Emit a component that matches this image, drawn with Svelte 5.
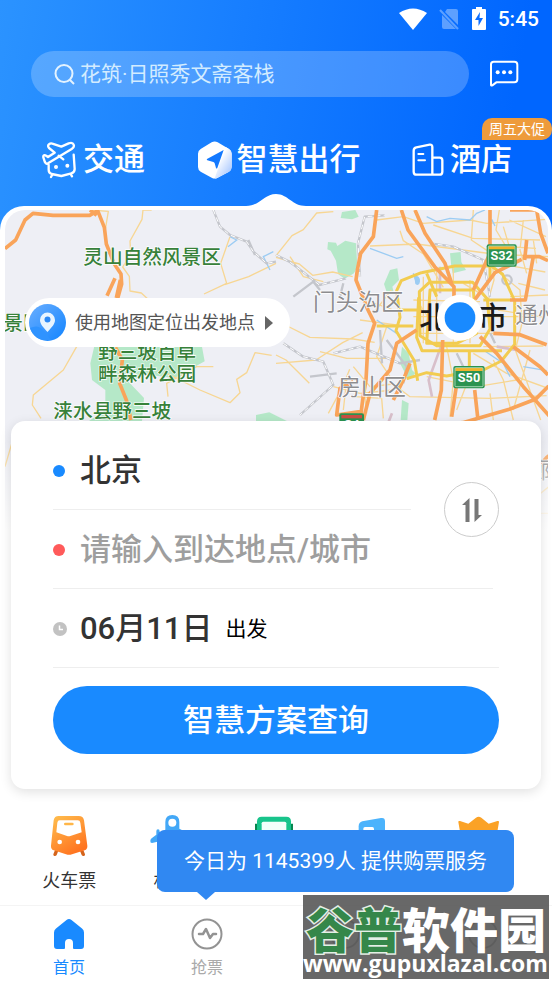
<script lang="ts">
	interface Tab {
		id: string;
		label: string;
		badge?: string;
	}

	const tabs: Tab[] = [
		{ id: 'transit', label: '交通' },
		{ id: 'smart', label: '智慧出行' },
		{ id: 'hotel', label: '酒店', badge: '周五大促' }
	];

	let keyword = $state('');
	let from = $state('北京');
	let to = $state('');
	let activeTab = $state('smart');

	function swap() {
		[from, to] = [to, from];
	}
</script>

<div class="app">
	<header class="header">
		<div class="status">
			<svg width="28" height="22" viewBox="0 0 28 22" aria-hidden="true">
				<path d="M0 5Q14-4 28 5L14 22z" fill="#fff" />
			</svg>
			<svg width="21" height="22" viewBox="0 0 21 22" aria-hidden="true">
				<path d="M8 1h9q2 0 2 2v14L6 4zM3 7l14 14H5q-2 0-2-2z" fill="#5da0ff" />
				<path d="M1 2l18 19" stroke="#5da0ff" stroke-width="2" />
			</svg>
			<svg width="14" height="23" viewBox="0 0 14 23" aria-hidden="true">
				<path d="M4 0h6v2h3q1 0 1 1v19q0 1-1 1H1q-1 0-1-1V3q0-1 1-1h3z" fill="#fff" />
				<path d="M8 5L3 13h3.500v6L11 11H7.500z" fill="#0b6dff" />
			</svg>
			<span class="clock">5:45</span>
		</div>

		<div class="search-row">
			<label class="search">
				<svg width="21" height="21" viewBox="0 0 21 21" fill="none" stroke="#e4f3ff" stroke-width="2" aria-hidden="true">
					<circle cx="10" cy="9.500" r="8.500" />
					<path d="M15.500 15.500l4.500 4.500" />
				</svg>
				<input type="text" aria-label="搜索" placeholder="花筑·日照秀文斋客栈" bind:value={keyword} />
			</label>
			<button class="message" type="button" aria-label="消息">
				<svg width="30" height="28" viewBox="640 182 90 84" aria-hidden="true">
					<path d="M646 257V195q0-8 8-8h62q9 0 9 9v44q0 9-9 9h-54l-12 9q-4 2-4-1z" fill="none" stroke="#fff" stroke-width="6" stroke-linejoin="round" />
					<g fill="#fff">
						<circle cx="666" cy="219" r="6" />
						<circle cx="685" cy="219" r="6" />
						<circle cx="704" cy="219" r="6" />
					</g>
				</svg>
			</button>
		</div>

		<nav class="tabs">
			{#each tabs as tab (tab.id)}
				<button class="tab" class:active={tab.id === activeTab} type="button" onclick={() => (activeTab = tab.id)}>
					{#if tab.id === 'transit'}
						<svg width="36" height="38" viewBox="123 89 108 114" fill="none" stroke="#fff" stroke-width="7" stroke-linecap="round" stroke-linejoin="round" aria-hidden="true">
							<path d="M147 110q-6-7 1-12q4-3 9-1l27 9l22-10q12-4 15 4q3 7-6 13l-71 43q-6 3-9-3l-5-15q-1-8 6-6l8 5l20-13z" />
							<path d="M176 133l14 11" />
							<path d="M146 161v15q0 9 9 12l29 6l30-8q10-3 10-13l-3-43" />
							<path d="M157 190l-4 7M212 188l4 7" />
							<circle cx="168" cy="167" r="2.500" fill="#fff" />
							<circle cx="202" cy="163" r="2.500" fill="#fff" />
						</svg>
					{:else if tab.id === 'smart'}
						<svg width="36" height="38" viewBox="591 92 108 114" aria-hidden="true">
							<defs>
								<linearGradient id="hex" x1="0.500" y1="0.200" x2="1" y2="0.800">
									<stop offset="0" stop-color="#fff" />
									<stop offset="1" stop-color="#a9c8ff" />
								</linearGradient>
							</defs>
							<path d="M635 96q9-5 18 0l34 20q8 5 8 14v40q0 9-8 14l-34 18q-9 5-18 0l-33-18q-8-5-8-14v-40q0-9 8-14z" fill="#fff" />
							<path d="M677 110l10 6q8 5 8 14v40q0 9-8 14l-34 18q-5 3-9 2z" fill="url(#hex)" />
							<path d="M671 119l-50 27q-2 2 1 4l18 5q3 1 4 4l4 14q2 3 4 0z" fill="#1379ff" />
						</svg>
					{:else}
						<svg width="32" height="34" viewBox="413 96 96 102" fill="none" stroke="#fff" stroke-width="7" stroke-linecap="round" stroke-linejoin="round" aria-hidden="true">
							<path d="M474 190V108q0-8-8-7l-40 8q-8 2-8 10v63q0 9 9 9h68q9 0 9-9v-34q0-8-8-8h-20" />
							<path d="M432 129h15M432 148h20" stroke-width="6" />
						</svg>
					{/if}
					<span>{tab.label}</span>
					{#if tab.badge}
						<span class="badge">{tab.badge}</span>
					{/if}
				</button>
			{/each}
		</nav>
	</header>

	<main class="panel">
		<svg class="notch" width="60" height="13" viewBox="0 0 60 13" aria-hidden="true">
			<path d="M0 13V12C14 12 18 0 30 0S46 12 60 12v1z" fill="#fff" />
		</svg>

		<div class="map">
			<svg class="map-art" viewBox="15 30 1629 960" preserveAspectRatio="xMidYMin slice" aria-hidden="true">
				<defs>
					<linearGradient id="fade" x1="0" y1="0" x2="0" y2="1">
						<stop offset="0" stop-color="#fff" stop-opacity="0" />
						<stop offset="1" stop-color="#fff" />
					</linearGradient>
				</defs>
				<rect x="0" y="30" width="1660" height="960" fill="#eeeff5" />

				<g fill="#b5e8c8">
					<path d="M285 430l-14 60 5 50 40 30v60l-50 34h160l6-70-48-50 60-20 80 10 90-50-10-54z" />
					<path d="M768 645l40-8 60 30v20H768z" />
					<path d="M984 126l24 2 4 10 24-16 32 8 4 70-10 20-28 16-20-14-6-40-16-30-10-4z" />
					<path d="M1026 36l40-6 10 20-20 8-34-4z" />
					<path d="M1170 210l22-5 5 35-20 20 5 20-20 2-10-30z" />
					<path d="M1206 440l20 20 10 50 10 10-20 20-26-50z" />
					<path d="M1350 160l32-4 2 30 14 24-40 10-4-20z" />
					<path d="M1206 600l20 10-4 50h-20z" />
				</g>

				<g fill="none" stroke="#f7d693" stroke-width="4" stroke-linejoin="round">
					<path d="M455 30h-26l-3 28-36 65 2 40-24 38 20 28 2 44 34 6 26 24M270 30l55 4-10 60M690 110l-28 80 18 60-68 32M828 190l-82 40-72 24M230 440l-40 70-90 75-3 30 26 40M640 500l-50 0-90 50 4 40M500 520l100 50 90 38 30-30-10-40 30-20 25-60 50 8" />
					<path d="M1000 35l-50 4-40 50-34 18-48 60M828 172l70 20 40 34 60-10 60 14M828 490l120-10 80-52 60-30M828 465l30 15 70 70M850 372l80 40 130 5 64 10M960 455l80 20 130 0M985 640l44-82 20-50M1060 500l50 60 70-8M1125 310l50 18M1080 360l120 16M870 170l40 60 60 15" />
					<path d="M1130 60l80-10 60 20 140-10 50 10 180-12M1110 138l140-6 230 30 165 8M1200 92l10 30 60 40 60 100M1300 75l120 40 200 5M1420 30l-6 90 60 40 8 80-20 70M1498 30l-10 60 30 50 90 5M1510 80l36 120 90 16M1530 290l115-5M1555 250l80 20M1494 330l140 22M1500 220l60 50 6 100-20 80 76 210M1450 440l180-2M1480 480l30 60 30 120M1400 350l200 0M1420 460l100 60 124 45M1280 530l150 30 120-20M1340 440l20 100-10 110M1190 560l40 30 240 5 170-8M1160 380l-30 90 40 60M1174 270l-54 70M1420 500l-50 130M1470 580l10 80M1000 560l80 20 100-10M1040 540l-10 90M1065 590l80 5 5 60M1090 550l10 90M1590 450l-50 180M1600 120l10 70M1580 220l-20-70 10-90M1528 60l110 50M1250 300l40 60M1390 250l50 30" />
					<path d="M1270 230v200M1310 210v230M1360 200v240M1240 300l200 5M1240 350h230M1260 400h220M1410 240v190" />
					<path d="M15 800l22-75M1622 880l25-20M1620 940h30M5 1010h60" />
				</g>

				<g fill="none" stroke="#9cccf3" stroke-width="4">
					<path d="M1280 50l30 15 40-10 60 5 20-20 25-10M1110 145l80 30 20-5M1240 220l10 30M1450 450l60 40 20 40M1570 500l70 12M820 155l-30 15 20 40M690 110l20 10-26 20M1130 360l60 40M1475 58l10 20" />
				</g>
				<path d="M1242 224q20 4 18 20t-14 8z" fill="#9cccf3" />

				<g fill="none" stroke="#c4c6cc" stroke-width="7" stroke-linejoin="round">
					<path d="M640 30l20 50 30 25 50 20 20 30 40 35 28-5M745 120l20 45" />
					<path d="M828 165l40 20 40 30 50 40 20-5 60-15M880 290l60-45 20 25M1080 230l-6-100 20-80 60-4M1030 250l-10 40" />
					<path d="M850 430l60 40 60 15 30 70-100 90M1000 460l80-20 120 50 60-10M1010 520l-80 10M1140 390l6 100 M1160 420l60 80-10 50M1290 130l70 10 90 40 20 110M1370 460l20 40M1485 430l-14-30" />
				</g>
				<g fill="none" stroke="#fff" stroke-width="3" stroke-dasharray="14 10">
					<path d="M640 30l20 50 30 25 50 20 20 30 40 35 28-5" />
					<path d="M828 165l40 20 40 30 50 40 20-5 60-15M1080 230l-6-100 20-80 60-4M1290 130l70 10 90 40 20 110M850 430l60 40 60 15 30 70-100 90M1000 460l80-20 120 50" />
				</g>
				<circle cx="1521" cy="240" r="14" fill="none" stroke="#c4c6cc" stroke-width="7" />
				<g fill="none" stroke="#d8bfca" stroke-width="8">
					<path d="M1320 200v80M1326 430l-40 110 10 50M1176 640l-10 25M1490 440l60 10" />
				</g>

				<g fill="none" stroke="#f2cc50" stroke-width="9" stroke-linejoin="round">
					<path d="M1264 218l100-20h110l34 25 36 80v130l-40 50-60 30M1264 218l-60 24-14 30 10 80-12 40 55 90 10 60" />
					<path d="M1258 275l30-28h130l44 50 8 90-30 50h-130l-50-30z" />
					<path d="M1290 270h130l10 130-60 30h-90zM1256 292l-6 120 16 40h240M1130 378h110M1205 330h60M1280 220l30 70M1408 455v60M1220 536l60-18 60 10 30-5M1470 200v40M1450 300h80" />
				</g>

				<g fill="none" stroke="#f9a45a" stroke-width="11" stroke-linejoin="round">
					<path d="M15 146l32-26 28-60 24-20 60 6h110l24-14 20 50 6 50 24 60 20 30 2 30-14 50M270 30l20 16M345 235l-24 52M361 240l-12 54M345 440l22 40-8 70 20 50 14 60" />
					<path d="M1130 30l-10 80-38 50-10 50-4 30 36 90 20 40-20 60-6 110-10 60-10 80 180 8 130-20 140-40 78-30 40-40M1204 30l20 60 80 110 58 60v60M1245 30l30 70 60 90 20 60M1470 30v130l-50 110M1530 30h80l12 70 22 60M1568 170h50l26 12M1600 170l-24 130h-46M1565 178l-80 40-60 80M1250 390l-60 40-20 80-60 70-20 80M1080 635l-70 10 10-80 40-20" />
					<path d="M1328 420l-4 150-20 90M1375 520l-20 130M1440 410l50 50 80 100 80 90M1480 400l80 4 80 30M1540 440l80 60 24 25M1424 570l10 90M1180 600l30-60 20-50M1580 120l-6 60" />
				</g>
				<path d="M1622 800q14-30 30-35" fill="none" stroke="#f9a45a" stroke-width="11" />

				<g class="park">
					<text x="250" y="193">灵山自然风景区</text>
					<text x="10" y="390">景区</text>
					<text x="294" y="477">野三坡百草</text>
					<text x="294" y="544">畔森林公园</text>
					<text x="160" y="655">涞水县野三坡</text>
				</g>
				<g class="district">
					<text x="939" y="330">门头沟区</text>
					<text x="1014" y="586">房山区</text>
					<text x="1546" y="370">通州区</text>
					<text x="1584" y="834">廊</text>
				</g>
				<text class="city" x="1258" y="385">北京市</text>

				<g class="shield">
					<rect x="1460" y="133" width="90" height="67" rx="6" fill="#2c9350" />
					<path d="M1466 139h78v9h-78z" fill="#f0b32a" />
					<rect x="1465" y="138" width="80" height="57" rx="3" fill="none" stroke="#d8f2df" stroke-width="2" />
					<text x="1505" y="181">S32</text>
					<rect x="1360" y="498" width="94" height="67" rx="6" fill="#2c9350" />
					<path d="M1366 504h82v9h-82z" fill="#f0b32a" />
					<rect x="1365" y="503" width="84" height="57" rx="3" fill="none" stroke="#d8f2df" stroke-width="2" />
					<text x="1407" y="546">S50</text>
					<rect x="1018" y="640" width="74" height="67" rx="6" fill="#2c9350" />
					<path d="M1024 645h62v10h-62z" fill="#c94f43" />
					<text x="1055" y="688">G4</text>
				</g>

				<circle cx="1380" cy="353" r="69" fill="#fff" />
				<circle cx="1380" cy="353" r="46" fill="#198aff" />
				<rect x="0" y="720" width="1660" height="270" fill="url(#fade)" />
			</svg>

			<button class="locate" type="button">
				<svg width="37" height="37" viewBox="0 0 37 37" aria-hidden="true">
					<defs>
						<linearGradient id="pin" x1="0" y1="0" x2="1" y2="1">
							<stop offset="0" stop-color="#6aaeff" />
							<stop offset="1" stop-color="#1184ff" />
						</linearGradient>
					</defs>
					<circle cx="18.500" cy="18.500" r="18.500" fill="url(#pin)" />
					<path d="M1 24q8-4 13 2t8 10Q6 38 1 24z" fill="#2f93ff" />
					<path d="M18.500 28C14 23 11 20 11 16a7.500 7.500 0 0 1 15 0c0 4-3 7-7.500 12z" fill="#e8f4ff" />
					<circle cx="18.500" cy="15.500" r="3" fill="#2b88f5" />
				</svg>
				<span>使用地图定位出发地点</span>
				<svg width="9" height="14" viewBox="0 0 9 14" aria-hidden="true">
					<path d="M1 0l8 7-8 7z" fill="#666" />
				</svg>
			</button>
		</div>

		<form class="card" onsubmit={(e) => e.preventDefault()}>
			<div class="row row-from">
				<label class="marker" for="from" aria-label="出发地"><i class="dot blue"></i></label>
				<input id="from" type="text" bind:value={from} />
			</div>
			<div class="row row-to">
				<label class="marker" for="to" aria-label="到达地"><i class="dot red"></i></label>
				<input id="to" type="text" placeholder="请输入到达地点/城市" bind:value={to} />
			</div>
			<button class="row row-date" type="button">
				<span class="marker">
					<svg width="14" height="14" viewBox="0 0 14 14" aria-hidden="true">
						<circle cx="7" cy="7" r="7" fill="#c2c2c2" />
						<path d="M6.500 3.500v4h3.500" fill="none" stroke="#fff" stroke-width="1.500" />
					</svg>
				</span>
				<span class="date">06月11日</span>
				<span class="depart">出发</span>
			</button>
			<button class="swap" type="button" aria-label="交换" onclick={swap}>
				<svg width="22" height="26" viewBox="0 0 22 26" fill="#777" aria-hidden="true">
					<path d="M8.500 1v24h-4V8H1z" />
					<path d="M13.500 25V2h4v16H21z" />
				</svg>
			</button>
			<button class="submit" type="submit">智慧方案查询</button>
		</form>

		<section class="services">
			<a class="service" href="#train">
				<svg width="44" height="44" viewBox="143 75 132 132" aria-hidden="true">
					<defs>
						<linearGradient id="train" x1="0" y1="0" x2="0.600" y2="1">
							<stop offset="0" stop-color="#ffc04f" />
							<stop offset="1" stop-color="#ff7420" />
						</linearGradient>
					</defs>
					<path d="M168 178l9 4-5 13q-2 4-7 3-4-1-3-5zM251 178l-9 4 5 13q2 4 7 3 4-1 3-5z" fill="#d4641c" />
					<path d="M178 78h60q14 0 16 13l10 76q1 10-8 14l-38 12q-9 3-18 0l-37-12q-9-4-8-14l8-76q2-13 15-13z" fill="url(#train)" />
					<path d="M181 91h54q7 0 8 7l4 29-34 11q-5 2-10 0l-32-11 3-29q1-7 7-7z" fill="#fff" />
					<rect x="194" y="98" width="29" height="8" rx="4" fill="#ffb648" />
					<circle cx="181" cy="156" r="7" fill="#fff" />
					<circle cx="236" cy="156" r="7" fill="#fff" />
				</svg>
				<span>火车票</span>
			</a>
			<a class="service" href="#flight">
				<svg width="44" height="44" viewBox="450 75 132 132" aria-hidden="true">
					<path d="M496 96q0-21 21-21t21 21v20l44 22v20l-44-8v30h-42v-30l-40 9q-6 0-5-7 0-6 6-9l12-9v-10q0-6 5-6t5 6v3l17-8z" fill="#43a8f7" />
					<circle cx="517" cy="98" r="12" fill="#fff" />
				</svg>
				<span>机票</span>
			</a>
			<a class="service" href="#bus" aria-label="汽车票">
				<svg width="44" height="44" viewBox="-69 75 132 132" aria-hidden="true">
					<path d="M-60 101h14v32h-14zM40 101h14v32H40z" fill="#08864f" />
					<path d="M-40 80h74q14 0 14 14v90h-102V94q0-14 14-14z" fill="#18c48b" />
					<rect x="-40" y="95" width="74" height="48" rx="5" fill="#f3fffa" />
				</svg>
			</a>
			<a class="service" href="#ticket" aria-label="门票">
				<svg width="44" height="44" viewBox="235 75 132 132" aria-hidden="true">
					<path d="M260 94l56-10q12-2 12 10v82h-79v-67q0-12 11-15z" fill="#4bb3fc" />
					<rect x="263" y="111" width="32" height="34" rx="5" fill="#fff" />
				</svg>
			</a>
			<a class="service" href="#member" aria-label="会员">
				<svg width="44" height="44" viewBox="544 75 132 132" aria-hidden="true">
					<path d="M548 96q-1-4 5-3l25 8 23-18q8-6 16 0l22 18 26-8q6-1 5 3l-12 70H560z" fill="#fba226" />
				</svg>
			</a>
			<div class="toast" role="status">今日为 1145399人 提供购票服务</div>
		</section>
	</main>

	<nav class="bottom">
		<a class="bottom-item current" href="#home">
			<svg width="32" height="32" viewBox="0 0 32 32" aria-hidden="true">
				<path d="M13.500 2q2.500-2 5 0L29 10.500q2 1.500 2 4V28q0 3-3 3h-7q-1 0-1-1v-5q0-4-4-4t-4 4v5q0 1-1 1H4q-3 0-3-3V14.500q0-2.500 2-4z" fill="#198aff" />
			</svg>
			<span>首页</span>
		</a>
		<a class="bottom-item" href="#grab">
			<svg width="32" height="32" viewBox="0 0 32 32" fill="none" stroke="#939393" aria-hidden="true">
				<circle cx="16" cy="16" r="14.500" stroke-width="2" />
				<path d="M8 16h4l3-5 4 9 3-4h3" stroke-width="2.500" stroke-linecap="round" stroke-linejoin="round" />
			</svg>
			<span>抢票</span>
		</a>
		<a class="bottom-item" href="#orders" aria-label="订单">
			<svg width="32" height="32" viewBox="0 0 32 32" fill="none" stroke="#939393" stroke-width="2" aria-hidden="true">
				<circle cx="16" cy="16" r="14" />
			</svg>
		</a>
		<a class="bottom-item" href="#mine" aria-label="我的">
			<svg width="32" height="32" viewBox="0 0 32 32" fill="none" stroke="#939393" stroke-width="2" aria-hidden="true">
				<circle cx="16" cy="16" r="14" />
				<path d="M16 10v12" />
			</svg>
		</a>
		<div class="stamp">
			<div class="stamp-name"><b>谷普</b>软件园</div>
			<div class="stamp-url">www.gupuxlazal.com</div>
		</div>
	</nav>
</div>

<style>
	:global(body) {
		margin: 0;
		background: #fff;
	}

	.app {
		display: flex;
		flex-direction: column;
		min-height: 100vh;
		font-family: Roboto, 'Noto Sans CJK SC', sans-serif;
		color: #333;
		overflow: hidden;
	}

	button,
	input {
		font: inherit;
		color: inherit;
		border: 0;
		padding: 0;
		background: none;
		outline: none;
	}

	button {
		cursor: pointer;
	}

	a {
		color: inherit;
		text-decoration: none;
	}

	svg {
		display: block;
		flex: none;
	}

	.header {
		background: linear-gradient(100deg, #2b93ff, #0066ff 90%);
		color: #fff;
		padding-bottom: 48px;
		margin-bottom: -24px;
	}

	.status {
		display: flex;
		align-items: center;
		justify-content: flex-end;
		height: 37px;
		gap: 12px;
		padding-right: 13px;
	}

	.clock {
		font-size: 21px;
		font-weight: 500;
		line-height: 24px;
	}

	.search-row {
		display: flex;
		align-items: center;
		padding: 14px 33px 0 31px;
		gap: 20px;
	}

	.search {
		flex: 1;
		display: flex;
		align-items: center;
		gap: 5px;
		height: 46px;
		padding: 0 23px;
		border-radius: 23px;
		background: rgba(255, 255, 255, 0.22);
	}

	.search input {
		flex: 1;
		min-width: 0;
		font-size: 21px;
	}

	.search input::placeholder {
		color: #d3ecff;
		opacity: 1;
	}

	.tabs {
		display: flex;
		justify-content: space-between;
		padding: 41px 40px 0 41px;
	}

	.tab {
		position: relative;
		display: flex;
		align-items: center;
		gap: 6px;
		height: 44px;
		font-size: 31px;
		font-weight: 500;
		line-height: 44px;
	}

	.tab.active {
		gap: 4px;
	}

	.badge {
		position: absolute;
		left: 70px;
		top: -20px;
		padding: 0 7px;
		border-radius: 10px 10px 10px 0;
		background: #ee9b3b;
		font-size: 14px;
		font-weight: 400;
		line-height: 22px;
		white-space: nowrap;
	}

	.panel {
		position: relative;
		flex: 1;
		padding: 4px 4px 0 5px;
		border-radius: 24px 24px 0 0;
		background: #fff;
	}

	.notch {
		position: absolute;
		left: 50%;
		top: -12px;
		margin-left: -30px;
	}

	.map {
		position: relative;
		height: 320px;
		border-radius: 20px 20px 0 0;
		overflow: hidden;
	}

	.map-art {
		width: 100%;
		height: 100%;
		font-family: 'Noto Sans CJK SC', sans-serif;
		font-weight: 500;
	}

	.park {
		font-size: 59px;
		fill: #37813a;
		stroke: #fff;
		stroke-width: 4px;
		paint-order: stroke;
	}

	.district {
		font-size: 68px;
		font-weight: 400;
		fill: #8d8d90;
		stroke: #fff;
		stroke-width: 4px;
		paint-order: stroke;
	}

	.city {
		font-size: 88px;
		fill: #1b1b1b;
	}

	.shield text {
		font-family: Roboto, sans-serif;
		font-size: 38px;
		font-weight: 700;
		fill: #fff;
		text-anchor: middle;
	}

	.locate {
		position: absolute;
		left: 20px;
		top: 88px;
		display: flex;
		align-items: center;
		gap: 9px;
		height: 49px;
		padding: 0 17px 0 4px;
		border-radius: 25px;
		background: #fff;
		color: #555;
		font-size: 18px;
		line-height: 24px;
	}

	.card {
		position: relative;
		margin: -109px 7px 0 6px;
		padding: 10px 42px 35px;
		border-radius: 14px;
		background: #fff;
		box-shadow: 0 3px 12px rgba(0, 0, 0, 0.12);
	}

	.row {
		display: flex;
		align-items: center;
		box-sizing: border-box;
		height: 79px;
		padding-top: 2px;
		border-bottom: 1px solid #eee;
		font-size: 31px;
		font-weight: 500;
		line-height: 44px;
	}

	.row-from {
		margin-right: 88px;
	}

	.row-to {
		margin-right: 6px;
	}

	.row-date {
		width: 100%;
		text-align: left;
	}

	.row input {
		flex: 1;
		min-width: 0;
		height: 44px;
	}

	.row input::placeholder {
		color: #9e9e9e;
		opacity: 1;
	}

	.marker {
		flex: none;
		width: 27px;
	}

	.dot {
		display: block;
		width: 12px;
		height: 12px;
		border-radius: 50%;
	}

	.blue {
		background: #198aff;
	}

	.red {
		background: #ff5a5a;
	}

	.depart {
		margin-left: 13px;
		color: #000;
		font-size: 21px;
		font-weight: 400;
	}

	.swap {
		position: absolute;
		right: 42px;
		top: 61px;
		display: grid;
		place-items: center;
		width: 55px;
		height: 55px;
		border: 1px solid #ccc;
		border-radius: 50%;
		background: #fff;
	}

	.submit {
		width: 100%;
		height: 68px;
		margin-top: 18px;
		padding-top: 2px;
		border-radius: 34px;
		background: #198aff;
		color: #fff;
		font-size: 31px;
		font-weight: 500;
		line-height: 44px;
	}

	.services {
		position: relative;
		display: grid;
		grid-template-columns: repeat(5, 1fr);
		margin-top: 26px;
		padding: 0 18px 11px 13px;
	}

	.service {
		display: flex;
		flex-direction: column;
		align-items: center;
		gap: 9px;
		font-size: 18px;
		line-height: 26px;
	}

	.toast {
		position: absolute;
		left: 152px;
		right: 34px;
		top: 15px;
		border-radius: 8px;
		background: #3088f2;
		color: #fff;
		font-size: 21px;
		line-height: 62px;
		text-align: center;
		white-space: nowrap;
	}

	.toast::after {
		content: '';
		position: absolute;
		left: 40px;
		top: 100%;
		border: 9px solid transparent;
		border-top: 8px solid #3088f2;
		border-bottom: 0;
	}

	.bottom {
		position: relative;
		display: grid;
		grid-template-columns: repeat(4, 1fr);
		height: 77px;
		border-top: 1px solid #f4f4f4;
	}

	.bottom-item {
		display: flex;
		flex-direction: column;
		align-items: center;
		gap: 6px;
		padding-top: 12px;
		color: #aaa;
		font-size: 16px;
		line-height: 24px;
	}

	.current {
		color: #198aff;
	}

	.stamp {
		position: absolute;
		right: 3px;
		bottom: 4px;
		width: 246px;
		height: 84px;
		background: rgba(88, 88, 88, 0.9);
		color: #fff;
		white-space: nowrap;
	}

	.stamp-name {
		padding: 8px 0 0 3px;
		font-family: 'Noto Sans CJK SC', sans-serif;
		font-size: 48px;
		font-weight: 900;
		line-height: 48px;
	}

	.stamp-name b {
		color: #35874a;
		font-weight: 900;
		-webkit-text-stroke: 3px #e4efe6;
		paint-order: stroke;
	}

	.stamp-url {
		font-family: 'Open Sans', 'Noto Sans', sans-serif;
		font-size: 23px;
		font-weight: 700;
		line-height: 24px;
	}
</style>
